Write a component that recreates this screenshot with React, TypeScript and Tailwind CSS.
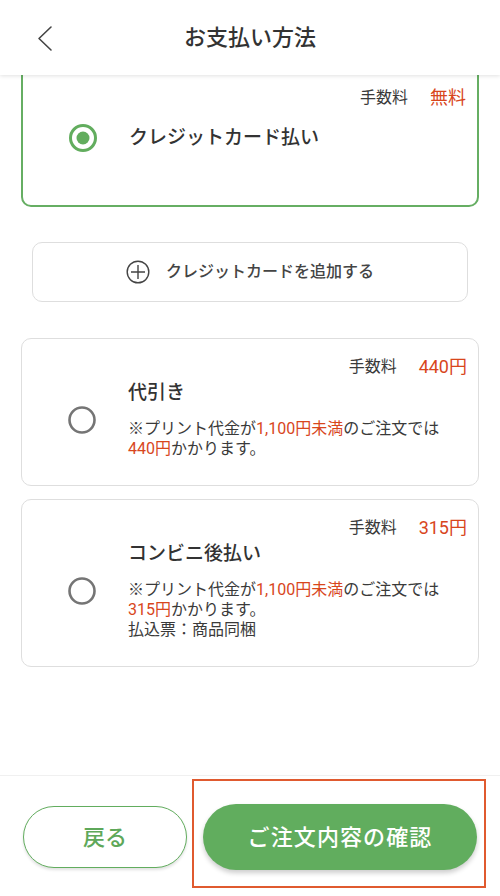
const FONT = "Roboto, 'Noto Sans CJK JP', 'Noto Sans', sans-serif";

function Radio({ checked }: { checked?: boolean }) {
  return (
    <svg width="30" height="30" viewBox="0 0 30 30" aria-hidden="true">
      {checked ? (
        <>
          <circle cx="15" cy="15" r="12.5" fill="none" stroke="#62AD5E" strokeWidth="3" />
          <circle cx="15" cy="15" r="6.5" fill="#62AD5E" />
        </>
      ) : (
        <circle cx="15" cy="15" r="12.5" fill="none" stroke="#757575" strokeWidth="2.6" />
      )}
    </svg>
  );
}

function Fee({ value }: { value: string }) {
  return (
    <div className="flex h-[22px] items-center justify-end gap-[22px] pr-[11px]">
      <span className="text-[16px] leading-[22px] text-[#3a3a3a]">手数料</span>
      <span className="text-[18px] leading-[22px] text-[#D8461C]">{value}</span>
    </div>
  );
}

function Red({ children }: { children: React.ReactNode }) {
  return <span className="text-[#D8461C]">{children}</span>;
}

function MethodCard({
  title,
  fee,
  lines,
}: {
  title: string;
  fee: string;
  lines: React.ReactNode;
}) {
  return (
    <div className="rounded-[10px] border-[1.5px] border-[#dedede] bg-white pt-[17px] pb-[26px]">
      <Fee value={fee} />
      <div className="mt-[2px] flex items-center">
        <div className="flex w-[106px] justify-center pl-[14px]">
          <Radio />
        </div>
        <div className="flex-1">
          <div className="text-[19px] leading-[26px] font-medium text-[#333]">{title}</div>
          <div className="mt-[13px] text-[16px] leading-[20px] text-[#3a3a3a]">{lines}</div>
        </div>
      </div>
    </div>
  );
}

export default function App() {
  return (
    <div
      className="relative flex h-[896px] w-[500px] flex-col overflow-hidden bg-white"
      style={{ fontFamily: FONT }}
    >
      <div className="absolute inset-x-0 top-0 z-10 flex h-[75px] items-center justify-center bg-white shadow-[0_1px_4px_rgba(0,0,0,0.12)]">
        <svg
          className="absolute left-[36px] top-[25px]"
          width="18"
          height="27"
          viewBox="0 0 18 27"
          aria-hidden="true"
        >
          <path d="M15 2 L3 13.5 L15 25" fill="none" stroke="#444" strokeWidth="1.6" strokeLinecap="round" strokeLinejoin="round" />
        </svg>
        <h1 className="text-[22px] font-medium text-[#333]">お支払い方法</h1>
      </div>

      <main className="flex-1 px-[21px] pt-[50px]">
        {/* selected credit card */}
        <div className="rounded-[10px] border-2 border-[#66AE63] bg-white pt-[35px] pb-[38px]">
          <Fee value="無料" />
          <div className="flex h-[58px] items-center">
            <div className="flex w-[106px] justify-center pl-[14px]">
              <Radio checked />
            </div>
            <span className="text-[19px] font-medium text-[#333]">クレジットカード払い</span>
          </div>
        </div>

        <div className="px-[11px] pt-[35px]">
          <button className="flex h-[60px] w-full items-center justify-center gap-[16px] rounded-[10px] border-[1.5px] border-[#dedede] bg-white">
            <svg width="24" height="24" viewBox="0 0 24 24" aria-hidden="true">
              <circle cx="12" cy="12" r="10.8" fill="none" stroke="#444" strokeWidth="1.4" />
              <path d="M12 5 V19 M5 12 H19" stroke="#444" strokeWidth="1.4" />
            </svg>
            <span className="text-[16px] font-medium text-[#444]">クレジットカードを追加する</span>
          </button>
        </div>

        <div className="mt-[36px] flex flex-col gap-[13px]">
          <MethodCard
            title="代引き"
            fee="440円"
            lines={
              <>
                <div>
                  ※プリント代金が<Red>1,100円未満</Red>のご注文では
                </div>
                <div>
                  <Red>440円</Red>かかります。
                </div>
              </>
            }
          />
          <MethodCard
            title="コンビニ後払い"
            fee="315円"
            lines={
              <>
                <div>
                  ※プリント代金が<Red>1,100円未満</Red>のご注文では
                </div>
                <div>
                  <Red>315円</Red>かかります。
                </div>
                <div>払込票：商品同梱</div>
              </>
            }
          />
        </div>
      </main>

      <footer className="relative flex h-[121px] items-center gap-[16px] border-t border-[#f0f0f0] bg-white px-[23px] pt-[2px]">
        <button className="flex h-[62px] w-[164px] items-center justify-center rounded-full border border-[#62AD5E] bg-white text-[22px] font-medium text-[#5EA85A] shadow-[0_2px_3px_rgba(0,0,0,0.12)]">
          戻る
        </button>
        <button className="flex h-[66px] w-[274px] items-center justify-center rounded-full bg-[#61AD5E] text-[22px] font-medium tracking-[0.05em] text-white shadow-[0_3px_5px_rgba(0,0,0,0.2)]">
          ご注文内容の確認
        </button>
        <div className="pointer-events-none absolute left-[192px] top-[3px] h-[109px] w-[294px] border-2 border-[#E05A2F]" />
      </footer>
    </div>
  );
}
